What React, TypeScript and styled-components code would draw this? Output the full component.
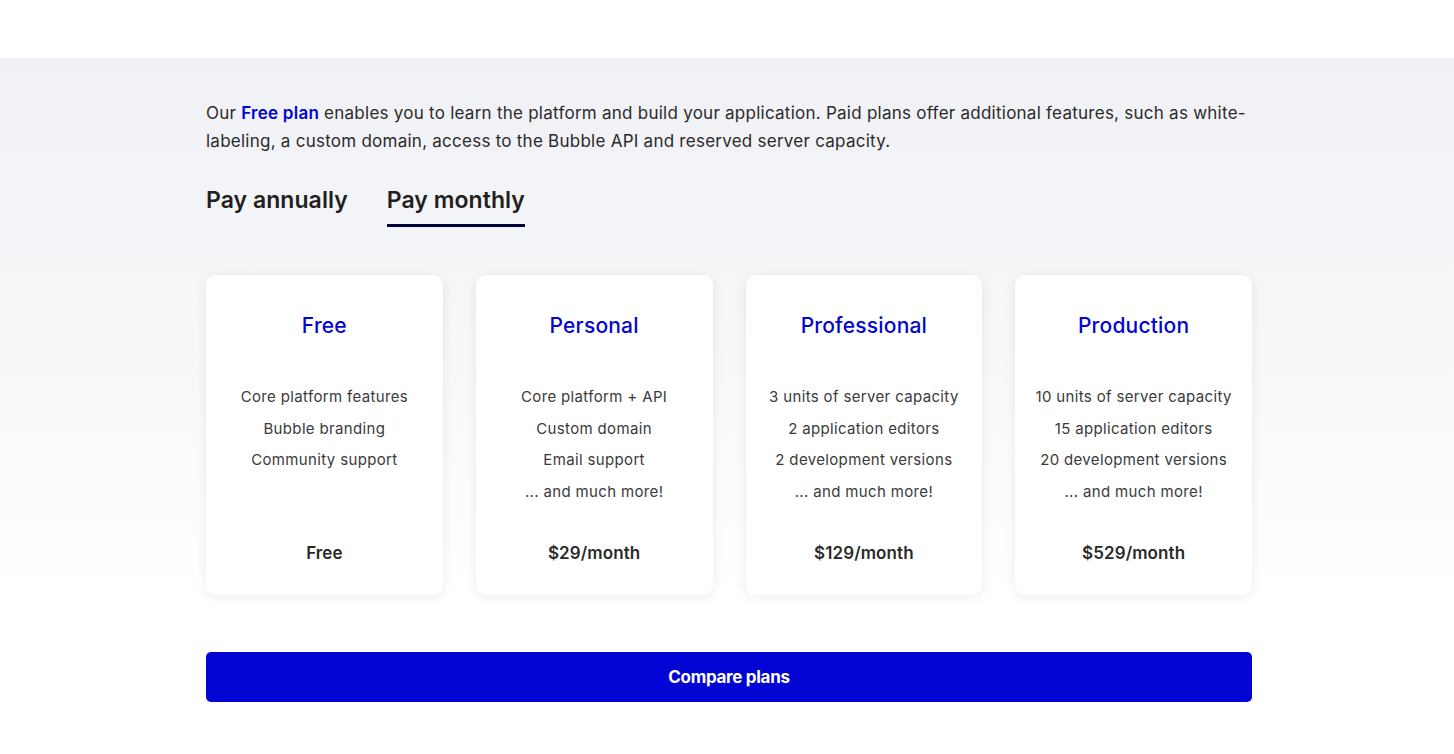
import { FC } from 'react';
import styled, { createGlobalStyle } from 'styled-components';

const colors = {
	blue: '#0205d3',
	text: '#2a2a2a',
	muted: '#3a3a3a',
	navy: '#05053d',
};

const GlobalStyle = createGlobalStyle`
	* { box-sizing: border-box; }
	body {
		margin: 0;
		background: #ffffff;
		font-family: Inter, "Open Sans", "Liberation Sans", sans-serif;
		color: ${colors.text};
	}
`;

interface IPlan {
	title: string;
	features: string[];
	price: string;
}

const plans: IPlan[] = [
	{
		title: 'Free',
		features: ['Core platform features', 'Bubble branding', 'Community support'],
		price: 'Free',
	},
	{
		title: 'Personal',
		features: ['Core platform + API', 'Custom domain', 'Email support', '... and much more!'],
		price: '$29/month',
	},
	{
		title: 'Professional',
		features: [
			'3 units of server capacity',
			'2 application editors',
			'2 development versions',
			'... and much more!',
		],
		price: '$129/month',
	},
	{
		title: 'Production',
		features: [
			'10 units of server capacity',
			'15 application editors',
			'20 development versions',
			'... and much more!',
		],
		price: '$529/month',
	},
];

const TopBar = styled.div`
	height: 58px;
	background: #ffffff;
`;

const Section = styled.section`
	background: linear-gradient(180deg, #f0f1f5 0%, #f6f7f9 50%, #ffffff 100%);
	background-size: 100% 540px;
	background-repeat: no-repeat;
	padding: 41px 0 60px;
`;

const Inner = styled.div`
	width: 1046px;
	margin: 0 auto 0 206px;
`;

const Intro = styled.p`
	margin: 0;
	font-size: 17px;
	line-height: 28px;
	letter-spacing: 0.25px;
	color: ${colors.text};
`;

const Highlight = styled.strong`
	color: ${colors.blue};
	font-weight: 600;
`;

const Tabs = styled.div`
	display: flex;
	gap: 39px;
	margin-top: 29px;
`;

const Tab = styled.div<{ $active?: boolean }>`
	font-size: 23px;
	font-weight: 600;
	letter-spacing: 0.05px;
	line-height: 32px;
	padding-bottom: 8px;
	color: #231f20;
	border-bottom: 3px solid ${({ $active }) => ($active ? colors.navy : 'transparent')};
`;

const Cards = styled.div`
	display: grid;
	grid-template-columns: repeat(4, 1fr);
	gap: 33px;
	margin-top: 48px;
`;

const Card = styled.div`
	display: flex;
	flex-direction: column;
	align-items: center;
	height: 320px;
	padding: 38px 10px 0;
	background: #ffffff;
	border-radius: 10px;
	box-shadow: 0 2px 12px rgba(20, 20, 60, 0.08);
	text-align: center;
`;

const CardTitle = styled.h3`
	margin: 0;
	font-size: 21px;
	line-height: 26px;
	font-weight: 500;
	letter-spacing: 0.2px;
	color: ${colors.blue};
`;

const FeatureList = styled.ul`
	list-style: none;
	margin: 42px 0 0;
	padding: 0;
	height: 138px;
`;

const Feature = styled.li`
	font-size: 15px;
	line-height: 31.7px;
	letter-spacing: 0.35px;
	color: ${colors.muted};
`;

const Price = styled.div`
	margin-top: 24px;
	font-size: 17px;
	font-weight: 600;
	letter-spacing: 0.1px;
	color: ${colors.text};
`;

const CompareButton = styled.button`
	display: block;
	width: 100%;
	height: 50px;
	margin-top: 57px;
	border: none;
	border-radius: 5px;
	background: ${colors.blue};
	color: #ffffff;
	font-family: inherit;
	font-size: 17px;
	font-weight: 700;
	letter-spacing: -0.3px;
	cursor: pointer;
`;

const PlanCard: FC<IPlan> = ({ title, features, price }) => (
	<Card>
		<CardTitle>{title}</CardTitle>
		<FeatureList>
			{features.map((f) => (
				<Feature key={f}>{f}</Feature>
			))}
		</FeatureList>
		<Price>{price}</Price>
	</Card>
);

const App: FC = () => (
	<>
		<GlobalStyle />
		<TopBar />
		<Section>
			<Inner>
				<Intro>
					Our <Highlight>Free plan</Highlight> enables you to learn the platform and build your
					application. Paid plans offer additional features, such as white-labeling, a custom
					domain, access to the Bubble API and reserved server capacity.
				</Intro>
				<Tabs>
					<Tab>Pay annually</Tab>
					<Tab $active>Pay monthly</Tab>
				</Tabs>
				<Cards>
					{plans.map((p) => (
						<PlanCard key={p.title} {...p} />
					))}
				</Cards>
				<CompareButton>Compare plans</CompareButton>
			</Inner>
		</Section>
	</>
);

export default App;
